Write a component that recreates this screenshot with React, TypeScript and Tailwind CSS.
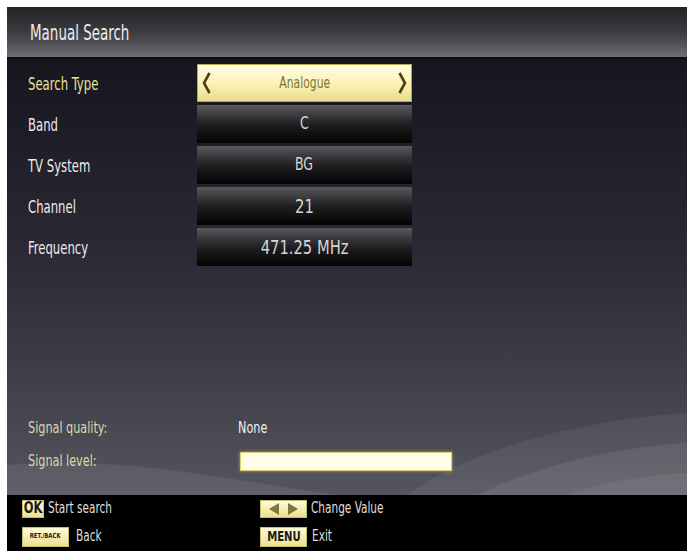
import React from 'react'

const rows = [
  { label: 'Search Type', value: 'Analogue', active: true, size: 'text-[15px]' },
  { label: 'Band', value: 'C', size: 'text-[17px]' },
  { label: 'TV System', value: 'BG', size: 'text-[17px]' },
  { label: 'Channel', value: '21', size: 'text-[20px]' },
  { label: 'Frequency', value: '471.25 MHz', size: 'text-[20px]' },
]

// the TV font is tall and narrow, so squeeze text horizontally
function Narrow({ children, className = '' }: { children: React.ReactNode; className?: string }) {
  return <span className={`inline-block whitespace-nowrap ${className}`}>{children}</span>
}

function Chevron({ dir }: { dir: 'left' | 'right' }) {
  return (
    <svg width="9" height="22" viewBox="0 0 9 22" className="shrink-0">
      <polyline
        points={dir === 'left' ? '7.5,1 2,11 7.5,21' : '1.5,1 7,11 1.5,21'}
        fill="none"
        stroke="#4a3f0e"
        strokeWidth="2.6"
      />
    </svg>
  )
}

function ValueBox({ value, active, size }: { value: string; active?: boolean; size: string }) {
  if (active) {
    return (
      <div className="flex h-full w-[215px] items-center justify-between border border-[#b8a850] bg-gradient-to-b from-[#fffce0] via-[#fbf3b8] to-[#e9dc8c] px-[4px]">
        <Chevron dir="left" />
        <Narrow className={`${size} origin-center scale-x-[0.8] text-[#7d7434]`}>{value}</Narrow>
        <Chevron dir="right" />
      </div>
    )
  }
  return (
    <div className="flex h-full w-[215px] items-center justify-center bg-gradient-to-b from-[#5a5a5c] via-[#1c1c1e] via-55% to-[#050505]">
      <Narrow className={`${size} origin-center scale-x-[0.82] text-[#d6d6d6]`}>{value}</Narrow>
    </div>
  )
}

function Badge({ children, className = '' }: { children: React.ReactNode; className?: string }) {
  return (
    <div
      className={`flex items-center justify-center border border-[#c9bd70] bg-gradient-to-b from-[#fffbd8] to-[#ece08e] text-[#1a1a1a] ${className}`}
    >
      {children}
    </div>
  )
}

export default function App() {
  return (
    <div className="flex h-[554px] w-[690px] bg-white p-[7px] pr-[3px] pb-[3px] font-[family-name:'DejaVu_Sans_Condensed','Liberation_Sans',sans-serif]">
      <div className="flex flex-1 flex-col overflow-hidden">
        {/* header */}
        <div className="flex h-[50px] items-center bg-gradient-to-b from-[#242427] via-[#3b3b40] to-[#6e6e74] pl-[23px]">
          <Narrow className="origin-left scale-x-[0.68] text-[22px] text-[#ececec]">Manual Search</Narrow>
        </div>
        <div className="h-[2px] bg-[#0d0d10]" />

        {/* main */}
        <div className="relative flex flex-1 flex-col bg-gradient-to-b from-[#17161f] via-[#2a2935] via-45% to-[#55555f]">
          <svg
            className="pointer-events-none absolute bottom-0 left-0"
            width="680"
            height="110"
            viewBox="0 0 680 110"
          >
            <path d="M0 80 C120 70 220 95 330 110 L0 110 Z" fill="#ffffff" opacity="0.07" />
            <path d="M400 110 C470 60 580 35 680 28 L680 110 Z" fill="#ffffff" opacity="0.06" />
            <path d="M470 110 C530 80 610 62 680 58 L680 110 Z" fill="#ffffff" opacity="0.07" />
            <path d="M560 110 C600 96 640 90 680 88 L680 110 Z" fill="#ffffff" opacity="0.06" />
          </svg>

          <div className="relative flex flex-col gap-[3px] pt-[5px]">
            {rows.map((r) => (
              <div key={r.label} className="flex h-[38px] items-center">
                <div className="w-[190px] pl-[21px]">
                  <Narrow
                    className={`origin-left scale-x-[0.72] text-[18px] ${
                      r.active ? 'text-[#ebe09a]' : 'text-[#ececec]'
                    }`}
                  >
                    {r.label}
                  </Narrow>
                </div>
                <ValueBox value={r.value} active={r.active} size={r.size} />
              </div>
            ))}
          </div>

          <div className="flex-1" />

          <div className="relative flex flex-col pb-[24px]">
            <div className="flex h-[20px] items-center">
              <div className="w-[231px] pl-[21px]">
                <Narrow className="origin-left scale-x-[0.78] text-[16px] text-[#dcd7a6]">Signal quality:</Narrow>
              </div>
              <Narrow className="origin-left scale-x-[0.78] text-[16px] text-[#f0f0f0]">None</Narrow>
            </div>
            <div className="mt-[13px] flex h-[20px] items-center">
              <div className="w-[233px] pl-[21px]">
                <Narrow className="origin-left scale-x-[0.78] text-[16px] text-[#dcd7a6]">Signal level:</Narrow>
              </div>
              <div className="h-[19px] w-[212px] border border-[#d9cf70] bg-[#fffdea] shadow-[0_0_3px_#b9ad50]" />
            </div>
          </div>
        </div>

        {/* footer */}
        <div className="flex h-[56px] flex-col justify-center gap-[9px] bg-black pl-[15px] text-[15px] text-[#dedede]">
          <div className="flex h-[18px] items-center">
            <div className="flex w-[238px] items-center gap-[4px]">
              <Badge className="h-[18px] w-[22px]">
                <Narrow className="scale-x-[0.85] text-[15px] font-bold">OK</Narrow>
              </Badge>
              <Narrow className="origin-left scale-x-[0.78]">Start search</Narrow>
            </div>
            <div className="flex items-center gap-[4px]">
              <Badge className="h-[18px] w-[47px] gap-[9px]">
                <svg width="10" height="12" viewBox="0 0 10 12">
                  <polygon points="10,0 0,6 10,12" fill="#7c7a3a" />
                </svg>
                <svg width="10" height="12" viewBox="0 0 10 12">
                  <polygon points="0,0 10,6 0,12" fill="#7c7a3a" />
                </svg>
              </Badge>
              <Narrow className="origin-left scale-x-[0.78]">Change Value</Narrow>
            </div>
          </div>
          <div className="flex h-[20px] items-center">
            <div className="flex w-[238px] items-center gap-[7px]">
              <Badge className="h-[20px] w-[47px]">
                <Narrow className="scale-x-[0.85] text-[7px] font-bold">RET./BACK</Narrow>
              </Badge>
              <Narrow className="origin-left scale-x-[0.78]">Back</Narrow>
            </div>
            <div className="flex items-center gap-[5px]">
              <Badge className="h-[20px] w-[47px]">
                <Narrow className="scale-x-[0.8] text-[14px] font-bold">MENU</Narrow>
              </Badge>
              <Narrow className="origin-left scale-x-[0.78]">Exit</Narrow>
            </div>
          </div>
        </div>
      </div>
    </div>
  )
}
